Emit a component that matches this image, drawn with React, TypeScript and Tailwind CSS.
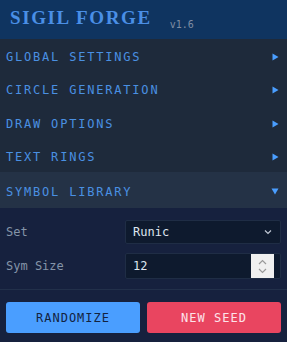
import React from "react";

const mono = { fontFamily: '"DejaVu Sans Mono", "Liberation Mono", monospace' };

function Row({ label, open }: { label: string; open?: boolean }) {
  return (
    <div
      className={`flex items-center justify-between pl-[6px] pr-[8px] pt-[3px] ${
        open ? "h-[36px] bg-[#243246]" : "h-[33.25px] bg-[#1e2a3b]"
      }`}
    >
      <span className="text-[12px] tracking-[1.8px] text-[#4a90e2]" style={mono}>
        {label}
      </span>
      {open ? (
        <svg width="8" height="7" viewBox="0 0 8 7">
          <path d="M0.5 0.5 L7.5 0.5 L4 6.5 Z" fill="#4a9eff" />
        </svg>
      ) : (
        <svg width="7" height="8" viewBox="0 0 7 8">
          <path d="M0.5 0.5 L6.5 4 L0.5 7.5 Z" fill="#4a9eff" />
        </svg>
      )}
    </div>
  );
}

export default function App() {
  return (
    <div className="w-[287px] h-[342px] bg-[#16213e] flex flex-col overflow-hidden">
      <div className="h-[39px] shrink-0 bg-[#0f3460] flex items-end pl-[10px] pb-[12px] gap-[18px]">
        <span
          className="text-[19px] leading-none font-bold tracking-[1.6px] text-[#4a8fe6]"
          style={{ fontFamily: '"Liberation Serif", serif' }}
        >
          SIGIL FORGE
        </span>
        <span className="text-[10px] leading-none text-[#7f8da3] mb-[-3px]" style={mono}>
          v1.6
        </span>
      </div>
      <Row label="GLOBAL SETTINGS" />
      <Row label="CIRCLE GENERATION" />
      <Row label="DRAW OPTIONS" />
      <Row label="TEXT RINGS" />
      <Row label="SYMBOL LIBRARY" open />
      <div className="flex flex-col gap-[9px] px-[6px] pt-[12px] pb-[10px] border-b border-[#22304a]">
        <div className="flex items-center">
          <span className="w-[119px] text-[12px] text-[#8494a8]" style={mono}>
            Set
          </span>
          <div className="flex-1 h-[24px] bg-[#0e1a2e] border border-[#1f2d45] rounded-[2px] flex items-center justify-between pl-[7px] pr-[8px]">
            <span className="text-[12px] text-[#dfe6f0]" style={mono}>
              Runic
            </span>
            <svg width="8" height="6" viewBox="0 0 8 6">
              <path d="M1 1.5 L4 4.5 L7 1.5" fill="none" stroke="#c0c8d4" strokeWidth="1.2" />
            </svg>
          </div>
        </div>
        <div className="flex items-center">
          <span className="w-[119px] text-[12px] text-[#8494a8]" style={mono}>
            Sym Size
          </span>
          <div className="flex-1 h-[26px] bg-[#0e1a2e] border border-[#1f2d45] rounded-[2px] flex items-center justify-between pl-[7px] pr-[6px]">
            <span className="text-[12px] text-[#dfe6f0]" style={mono}>
              12
            </span>
            <div className="w-[23px] h-[24px] bg-[#f0f0f0] flex flex-col items-center justify-center gap-[3px]">
              <svg width="9" height="6" viewBox="0 0 9 6">
                <path d="M1 5 L4.5 1.5 L8 5" fill="none" stroke="#9a9a9a" strokeWidth="1.2" />
              </svg>
              <svg width="9" height="6" viewBox="0 0 9 6">
                <path d="M1 1 L4.5 4.5 L8 1" fill="none" stroke="#9a9a9a" strokeWidth="1.2" />
              </svg>
            </div>
          </div>
        </div>
      </div>
      <div className="flex gap-[7px] px-[6px] pt-[12px]">
        <button
          className="flex-1 h-[31px] rounded-[3px] bg-[#4a9eff] text-[#13233f] text-[12px] tracking-[1px]"
          style={mono}
        >
          RANDOMIZE
        </button>
        <button
          className="flex-1 h-[31px] rounded-[3px] bg-[#e94560] text-[#fde3ea] text-[12px] tracking-[1px]"
          style={mono}
        >
          NEW SEED
        </button>
      </div>
    </div>
  );
}
